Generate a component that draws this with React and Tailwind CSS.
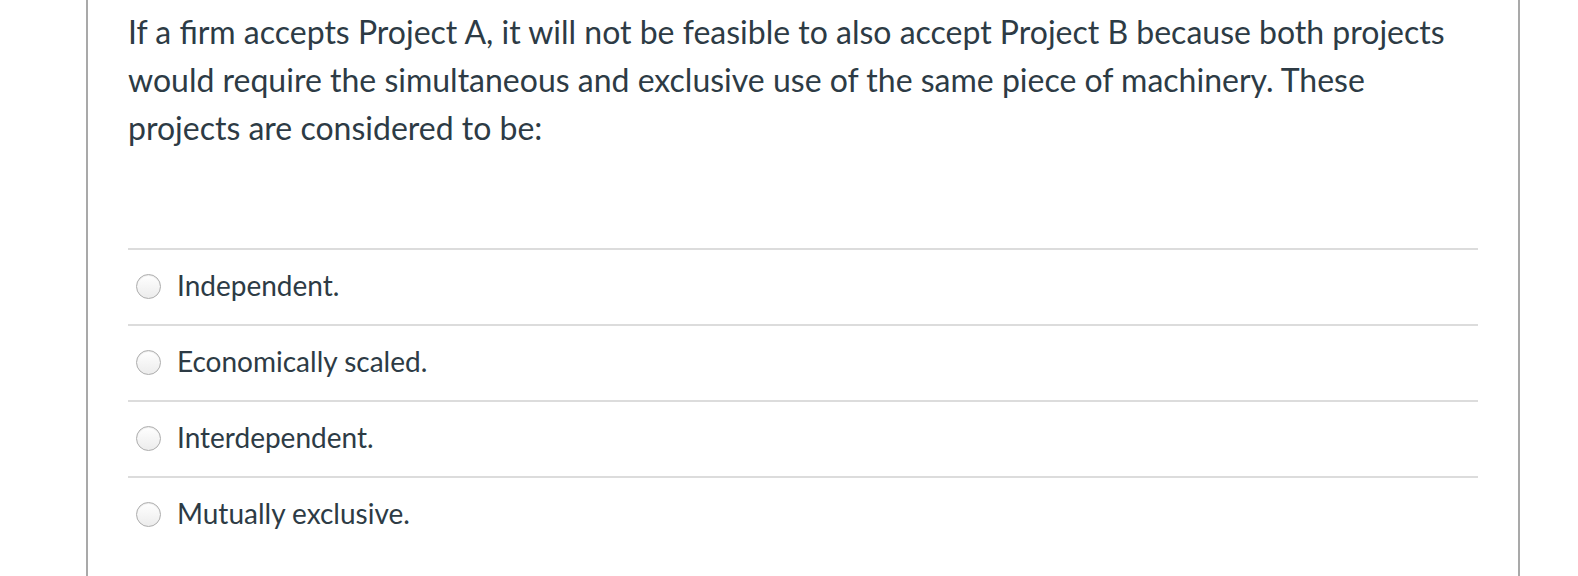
import React from 'react'

const options = [
    'Independent.',
    'Economically scaled.',
    'Interdependent.',
    'Mutually exclusive.',
]

const Radio = () => (
    <span className="inline-block w-[25px] h-[25px] mb-[2px] shrink-0 rounded-full border border-[#adadad] bg-gradient-to-b from-white to-[#ececec] shadow-[inset_0_1px_1px_rgba(0,0,0,0.08)]" />
)

const App = () => {
    return (
        <div className="w-full h-[576px] bg-white font-['Lato','Noto_Sans',sans-serif] text-[#2d3b45]">
            <div className="ml-[86px] w-[1434px] h-full border-x-2 border-[#a9a9a9] px-[40px] pt-[8px]">
                <p className="text-[32px] leading-[48px] pb-[96px]">
                    If a firm accepts Project A, it will not be feasible to also accept Project B because both projects would require the simultaneous and exclusive use of the same piece of machinery. These projects are considered to be:
                </p>

                <div className="flex flex-col">
                    {options.map((option) => (
                        <div
                            key={option}
                            className="flex items-center gap-[16px] h-[76px] border-t-2 border-[#dcdcdc] pl-[8px]"
                        >
                            <Radio />
                            <span className="text-[28px] leading-[36px] mb-[4px]">{option}</span>
                        </div>
                    ))}
                </div>
            </div>
        </div>
    )
}

export default App
